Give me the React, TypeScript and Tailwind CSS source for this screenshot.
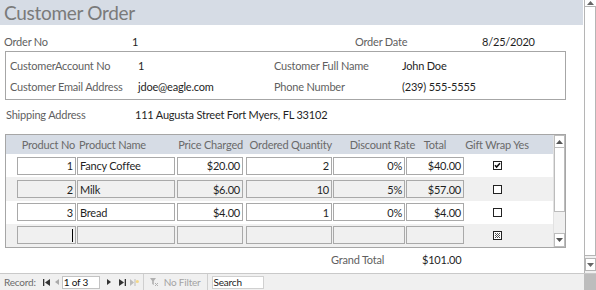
import React from "react";

const rows = [
  { no: "1", name: "Fancy Coffee", price: "$20.00", qty: "2", disc: "0%", total: "$40.00", gift: "checked", shade: false },
  { no: "2", name: "Milk", price: "$6.00", qty: "10", disc: "5%", total: "$57.00", gift: "empty", shade: true },
  { no: "3", name: "Bread", price: "$4.00", qty: "1", disc: "0%", total: "$4.00", gift: "empty", shade: false },
];

function Cell({ w, ml, align = "right", children, shade }: { w: string; ml: string; align?: "left" | "right"; children?: React.ReactNode; shade?: boolean }) {
  return (
    <div
      className={`${w} ${ml} h-[18px] border border-[#a9a9a9] flex items-center px-[2px] ${align === "right" ? "justify-end" : "justify-start"} ${shade ? "bg-[#f0f0f0]" : "bg-white"} text-[#1f1f1f]`}
    >
      {children}
    </div>
  );
}

function Check({ state }: { state: string }) {
  return (
    <svg width="9" height="9" viewBox="0 0 9 9">
      <rect x="0.5" y="0.5" width="8" height="8" fill="white" stroke="#222" />
      {state === "checked" && <path d="M2 4.2 L3.6 6 L7 2.2" fill="none" stroke="#111" strokeWidth="1.6" />}
      {state === "new" && (
        <g fill="#555">
          <rect x="2" y="2" width="1" height="1" />
          <rect x="4" y="2" width="1" height="1" />
          <rect x="6" y="2" width="1" height="1" />
          <rect x="3" y="3" width="1" height="1" />
          <rect x="5" y="3" width="1" height="1" />
          <rect x="2" y="4" width="1" height="1" />
          <rect x="4" y="4" width="1" height="1" />
          <rect x="6" y="4" width="1" height="1" />
          <rect x="3" y="5" width="1" height="1" />
          <rect x="5" y="5" width="1" height="1" />
          <rect x="2" y="6" width="1" height="1" />
          <rect x="4" y="6" width="1" height="1" />
          <rect x="6" y="6" width="1" height="1" />
        </g>
      )}
    </svg>
  );
}

function Row({ r, isNew }: { r?: (typeof rows)[number]; isNew?: boolean }) {
  const shade = isNew ? true : r!.shade;
  return (
    <div className={`h-[24px] flex items-center ${shade ? "bg-[#f0f0f0]" : "bg-white"}`}>
      <Cell w="w-[59px]" ml="ml-[11px]" shade={shade}>
        {isNew ? <span className="w-px h-[13px] bg-black" /> : r!.no}
      </Cell>
      <Cell w="w-[98px]" ml="ml-px" align="left" shade={shade}>{r?.name}</Cell>
      <Cell w="w-[66px]" ml="ml-[2px]" shade={shade}>{r?.price}</Cell>
      <Cell w="w-[86px]" ml="ml-[3px]" shade={shade}>{r?.qty}</Cell>
      <Cell w="w-[72px]" ml="ml-px" shade={shade}>{r?.disc}</Cell>
      <Cell w="w-[58px]" ml="ml-px" shade={shade}>{r?.total}</Cell>
      <div className="w-[66px] flex justify-center">
        <Check state={isNew ? "new" : r!.gift} />
      </div>
    </div>
  );
}

function Arrow({ dir, color = "#555" }: { dir: "up" | "down"; color?: string }) {
  return (
    <svg width="7" height="4" viewBox="0 0 7 4">
      {dir === "up" ? <path d="M0 4 L3.5 0 L7 4 Z" fill={color} /> : <path d="M0 0 L7 0 L3.5 4 Z" fill={color} />}
    </svg>
  );
}

function Label({ w, children }: { w: string; children: React.ReactNode }) {
  return <div className={`${w} shrink-0 text-[#5f5f5f] whitespace-nowrap`}>{children}</div>;
}

export default function App() {
  return (
    <div className="w-[596px] h-[290px] flex flex-col bg-white overflow-hidden [font-family:Lato,'Open_Sans',sans-serif] text-[11px] tracking-[-0.2px] leading-none">
      <div className="h-[273px] flex">
        {/* main form */}
        <div className="w-[584px] flex flex-col">
          <div className="h-[25px] bg-[#d6dce5] flex items-center pl-[4px] pr-[1px] mr-px">
            <span className="text-[19px] text-[#7a7a7a] tracking-[-0.3px]">Customer Order</span>
          </div>

          <div className="mt-[10px] h-[12px] flex items-center pl-[4px]">
            <Label w="w-[128px]">Order No</Label>
            <div className="w-[223px] text-[#1f1f1f]">1</div>
            <Label w="w-[127px]">Order Date</Label>
            <div className="text-[#1f1f1f]">8/25/2020</div>
          </div>

          <div className="mt-[4px] ml-[5px] w-[561px] h-[49px] border border-[#a6a6a6] flex flex-col pt-[3px] pl-[4px]">
            <div className="h-[21px] flex items-center">
              <Label w="w-[128px]">CustomerAccount No</Label>
              <div className="w-[136px] text-[#1f1f1f]">1</div>
              <Label w="w-[128px]">Customer Full Name</Label>
              <div className="text-[#1f1f1f]">John Doe</div>
            </div>
            <div className="h-[21px] flex items-center">
              <Label w="w-[128px]">Customer Email Address</Label>
              <div className="w-[136px] text-[#1f1f1f]">jdoe@eagle.com</div>
              <Label w="w-[128px]">Phone Number</Label>
              <div className="text-[#1f1f1f]">(239) 555-5555</div>
            </div>
          </div>

          <div className="mt-[7px] h-[14px] flex items-center pl-[6px]">
            <Label w="w-[129px]">Shipping Address</Label>
            <div className="text-[#1f1f1f]">111 Augusta Street Fort Myers, FL 33102</div>
          </div>

          {/* subform */}
          <div className="mt-[13px] ml-[5px] w-[561px] h-[114px] border border-[#a6a6a6] flex overflow-hidden">
            <div className="w-[547px] flex flex-col">
              <div className="h-[20px] bg-[#d6dce5] flex items-center text-[#6a6a6a] whitespace-nowrap">
                <div className="w-[59px] ml-[11px] flex justify-end pr-px">Product No</div>
                <div className="w-[98px] ml-px flex justify-start pl-[2px]">Product Name</div>
                <div className="w-[66px] ml-[2px] flex justify-end">Price Charged</div>
                <div className="w-[86px] ml-[3px] flex justify-end">Ordered Quantity</div>
                <div className="w-[72px] ml-px flex justify-end"><span className="-mr-[10px]">Discount Rate</span></div>
                <div className="w-[58px] ml-px flex justify-center">Total</div>
                <div className="w-[66px] flex justify-center">Gift Wrap Yes</div>
              </div>
              {rows.map((r) => (
                <Row key={r.no} r={r} />
              ))}
              <Row isNew />
            </div>
            <div className="w-[12px] flex flex-col bg-[#f0f0f0] border-l border-[#e2e2e2]">
              <div className="h-[13px] border border-[#bcbcbc] bg-white flex items-center justify-center">
                <Arrow dir="up" />
              </div>
              <div className="h-[64px] border-x border-b border-[#bcbcbc] bg-white" />
              <div className="flex-1" />
              <div className="h-[14px] border border-[#bcbcbc] bg-white flex items-center justify-center">
                <Arrow dir="down" />
              </div>
            </div>
          </div>

          <div className="mt-[5px] h-[12px] flex items-center pl-[331px]">
            <Label w="w-[91px]">Grand Total</Label>
            <div className="text-[#1f1f1f]">$101.00</div>
          </div>
        </div>

        {/* main vertical scrollbar */}
        <div className="w-[12px] flex flex-col bg-[#f0f0f0] border-l border-[#b5b5b5]">
          <div className="h-[7px] bg-white border-b border-[#b5b5b5] flex items-center justify-center">
            <Arrow dir="up" color="#666" />
          </div>
          <div className="h-[249px] bg-white border-r border-b border-[#b5b5b5]" />
          <div className="mt-[2px] h-[13px] bg-white border border-[#b5b5b5] flex items-center justify-center">
            <Arrow dir="down" color="#666" />
          </div>
        </div>
      </div>

      {/* record navigation bar */}
      <div className="h-[17px] flex border-t border-[#c9c9c9]">
        <div className="w-[584px] bg-[#f0f0f0] flex items-center text-[10px] text-[#6b6b6b]">
          <span className="ml-[4px]">Record:</span>
          <svg className="ml-[7px]" width="7" height="7" viewBox="0 0 7 7">
            <rect x="0" y="0" width="1.3" height="7" fill="#333" />
            <path d="M7 0 L2 3.5 L7 7 Z" fill="#333" />
          </svg>
          <svg className="ml-[5px]" width="4" height="6" viewBox="0 0 4 6">
            <path d="M4 0 L0 3 L4 6 Z" fill="#aaa" />
          </svg>
          <div className="ml-[3px] w-[38px] h-[13px] bg-white border border-[#c3c3c3] flex items-center pl-[1px] text-[#111]">1 of 3</div>
          <svg className="ml-[7px]" width="4" height="6" viewBox="0 0 4 6">
            <path d="M0 0 L4 3 L0 6 Z" fill="#333" />
          </svg>
          <svg className="ml-[8px]" width="7" height="7" viewBox="0 0 7 7">
            <path d="M0 0 L5 3.5 L0 7 Z" fill="#333" />
            <rect x="5.7" y="0" width="1.3" height="7" fill="#333" />
          </svg>
          <svg className="ml-[4px]" width="9" height="7" viewBox="0 0 9 7">
            <path d="M0 0 L4 3.5 L0 7 Z" fill="#bbb" />
            <rect x="4.5" y="0" width="1" height="7" fill="#bbb" />
            <circle cx="7.3" cy="2.5" r="1.6" fill="#f3d88a" />
          </svg>
          <div className="ml-[4px] w-px h-[17px] bg-[#cfcfcf]" />
          <svg className="ml-[6px]" width="8" height="8" viewBox="0 0 8 8">
            <path d="M0 0 L6 0 L3.8 3 L3.8 7 L2.2 6 L2.2 3 Z" fill="#b0b0b0" />
            <path d="M5 5 L8 8 M8 5 L5 8" stroke="#b0b0b0" strokeWidth="1" />
          </svg>
          <span className="ml-[6px] text-[#a3a3a3]">No Filter</span>
          <div className="ml-[6px] w-px h-[17px] bg-[#cfcfcf]" />
          <div className="ml-[4px] w-[52px] h-[13px] bg-white border border-[#d0d0d0] flex items-center pl-[1px] text-[#222]">Search</div>
        </div>
        <div className="w-[12px] bg-[#bdbdbd]" />
      </div>
    </div>
  );
}
